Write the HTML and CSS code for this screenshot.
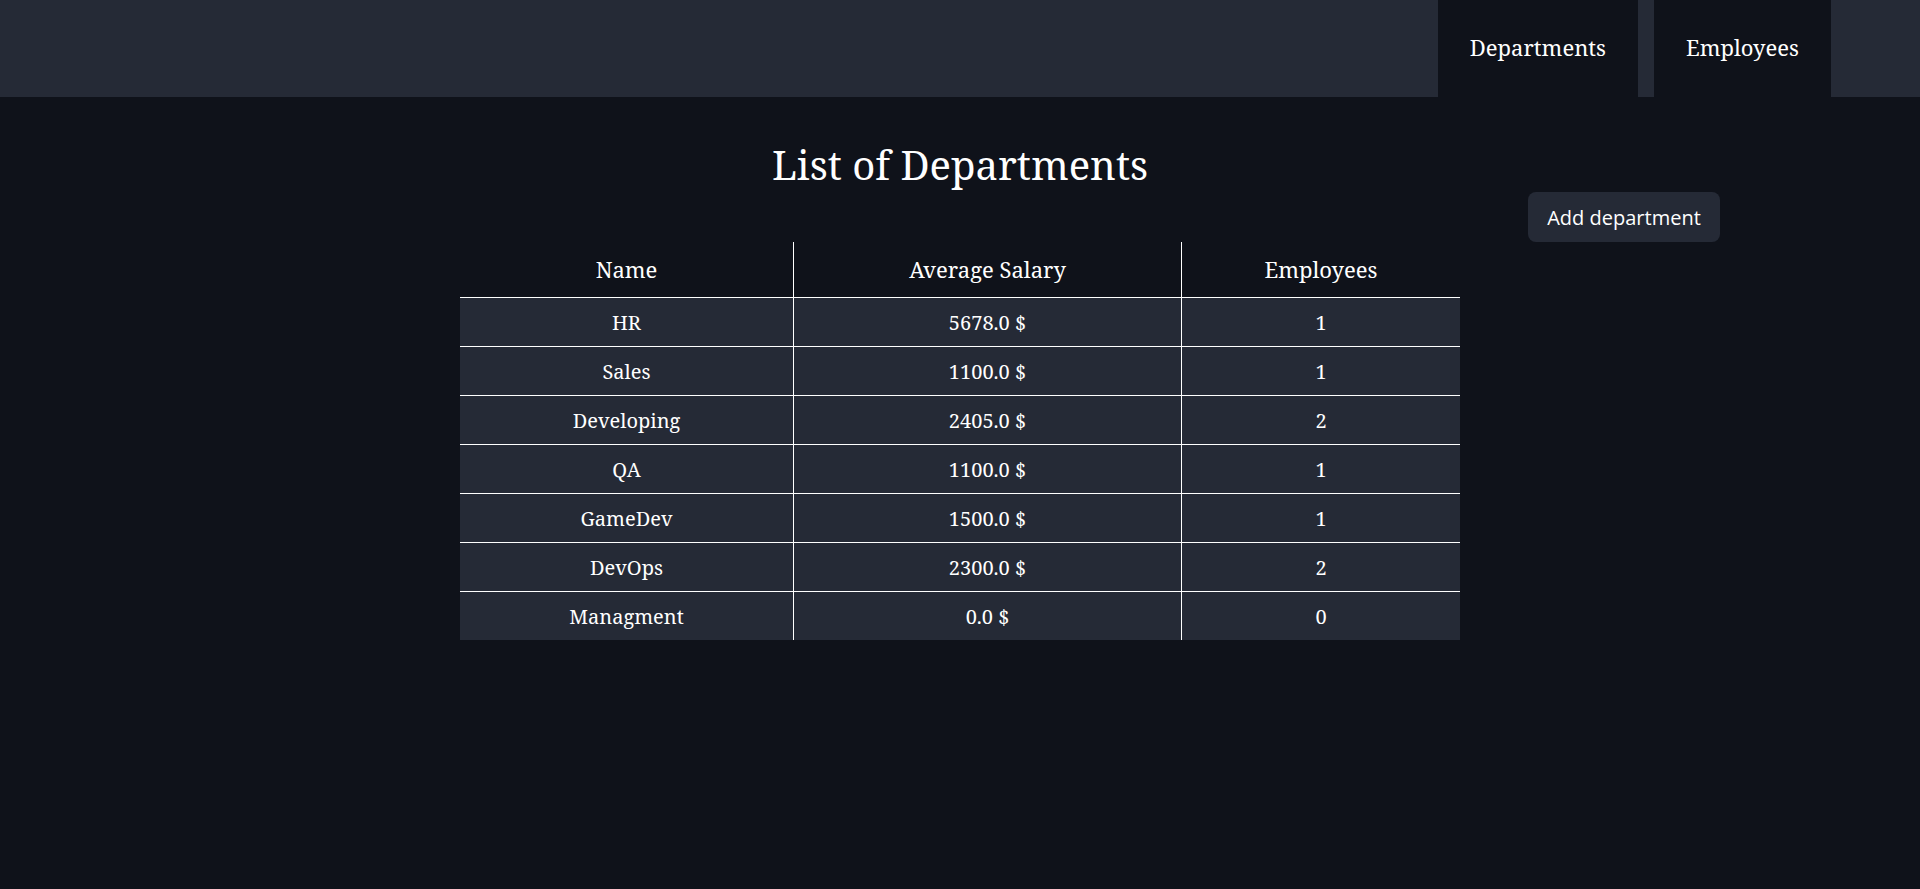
FILE: index.html
```html
<!DOCTYPE html>
<html lang="en">
<head>
<meta charset="utf-8">
<title>List of Departments</title>
<link rel="stylesheet" href="styles.css">
</head>
<body>
<header class="topbar">
  <nav class="tabs">
    <a class="tab" href="#">Departments</a>
    <a class="tab" href="#">Employees</a>
  </nav>
</header>
<main class="content">
  <h1 class="title">List of Departments</h1>
  <button class="add-btn" type="button">Add department</button>
  <table class="dept-table">
    <colgroup>
      <col class="c1"><col class="c2"><col class="c3">
    </colgroup>
    <thead>
      <tr><th>Name</th><th>Average Salary</th><th>Employees</th></tr>
    </thead>
    <tbody>
      <tr><td>HR</td><td>5678.0 $</td><td>1</td></tr>
      <tr><td>Sales</td><td>1100.0 $</td><td>1</td></tr>
      <tr><td>Developing</td><td>2405.0 $</td><td>2</td></tr>
      <tr><td>QA</td><td>1100.0 $</td><td>1</td></tr>
      <tr><td>GameDev</td><td>1500.0 $</td><td>1</td></tr>
      <tr><td>DevOps</td><td>2300.0 $</td><td>2</td></tr>
      <tr><td>Managment</td><td>0.0 $</td><td>0</td></tr>
    </tbody>
  </table>
</main>
</body>
</html>
```

FILE: styles.css
```css
* { box-sizing: border-box; }
html, body {
  margin: 0;
  padding: 0;
  background: #0f121a;
  color: #ffffff;
  font-family: "Noto Serif", "DejaVu Serif", serif;
}
.topbar {
  height: 97px;
  background: #252a36;
  display: flex;
  justify-content: flex-end;
  padding-right: 89px;
}
.tabs {
  display: flex;
  gap: 16px;
}
.tab {
  display: flex;
  align-items: center;
  padding: 0 32px 4px;
  background: #0f121a;
  color: #ffffff;
  text-decoration: none;
  font-size: 22px;
}
.content {
  width: 1520px;
  margin: 0 auto;
  display: flex;
  flex-direction: column;
  padding-top: 43px;
}
.title {
  margin: 0;
  font-size: 40px;
  line-height: 50px;
  font-weight: 400;
  text-align: center;
}
.add-btn {
  align-self: flex-end;
  margin-top: 2px;
  width: 192px;
  height: 50px;
  border: none;
  border-radius: 8px;
  background: #252a36;
  color: #ffffff;
  font-family: "Open Sans", "Noto Sans", sans-serif;
  font-size: 20px;
  padding: 0;
  cursor: pointer;
}
.dept-table {
  align-self: center;
  width: 1000px;
  table-layout: fixed;
  border-collapse: separate;
  border-spacing: 0;
}
.c1 { width: 333px; }
.c2 { width: 388px; }
.c3 { width: 279px; }
.dept-table th {
  height: 56px;
  font-size: 22px;
  font-weight: 400;
  border-bottom: 1px solid #ffffff;
  padding: 0 0 2px;
}
.dept-table td {
  height: 49px;
  font-size: 20px;
  background: #252a36;
  text-align: center;
  border-bottom: 1px solid #ffffff;
  padding: 0;
}
.dept-table tbody tr:last-child td {
  border-bottom: none;
  height: 48px;
}
.dept-table th + th,
.dept-table td + td {
  border-left: 1px solid #ffffff;
}
```
